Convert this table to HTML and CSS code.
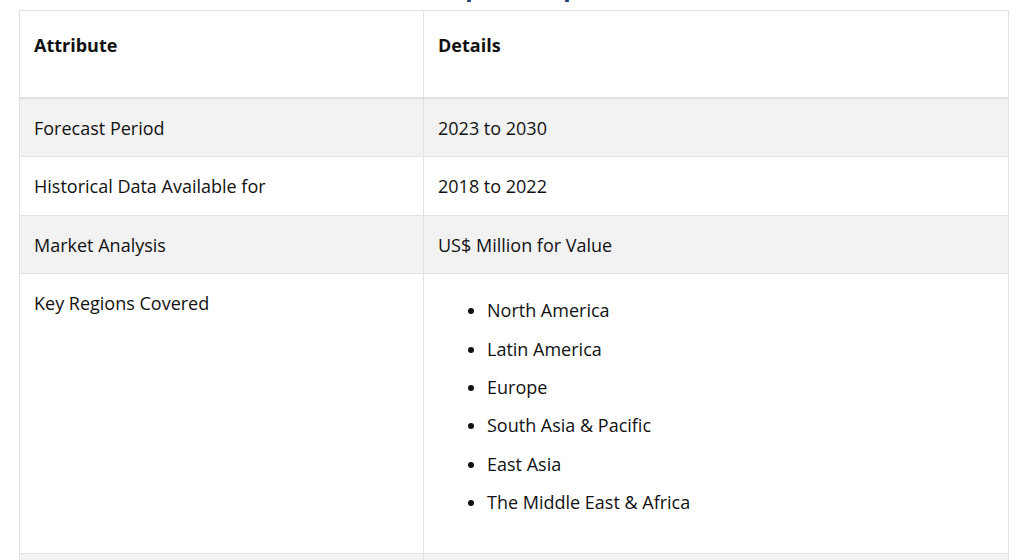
FILE: index.html
```html
<!DOCTYPE html>
<html lang="en">
<head>
    <meta charset="UTF-8">
    <meta name="viewport" content="width=device-width, initial-scale=1.0">
    <title>Report Scope</title>
    <link rel="stylesheet" href="styles.css">
</head>
<body>
    <div class="scope">
        <h2 class="scope-title">Report Scope</h2>
        <table class="scope-table">
            <thead>
                <tr>
                    <th class="col-attr">Attribute</th>
                    <th>Details</th>
                </tr>
            </thead>
            <tbody>
                <tr>
                    <td>Forecast Period</td>
                    <td>2023 to 2030</td>
                </tr>
                <tr>
                    <td>Historical Data Available for</td>
                    <td>2018 to 2022</td>
                </tr>
                <tr>
                    <td>Market Analysis</td>
                    <td>US$ Million for Value</td>
                </tr>
                <tr>
                    <td>Key Regions Covered</td>
                    <td>
                        <ul class="regions">
                            <li>North America</li>
                            <li>Latin America</li>
                            <li>Europe</li>
                            <li>South Asia &amp; Pacific</li>
                            <li>East Asia</li>
                            <li>The Middle East &amp; Africa</li>
                        </ul>
                    </td>
                </tr>
                <tr>
                    <td>Key Countries Covered</td>
                    <td>United States, Canada, Mexico, Brazil</td>
                </tr>
            </tbody>
        </table>
    </div>
</body>
</html>
```

FILE: styles.css
```css
* {
    margin: 0;
    padding: 0;
    box-sizing: border-box;
}

html, body {
    height: 100%;
    overflow: hidden;
}

body {
    font-family: "Open Sans", "Noto Sans", sans-serif;
    color: #111;
    background: #fff;
}

.scope {
    width: 990px;
    margin-left: 19px;
}

.scope-title {
    text-align: center;
    color: #1d3a78;
    font-size: 24px;
    font-weight: 700;
    line-height: 30px;
    margin-top: -28px;
    height: 38px;
}

.scope-table {
    width: 100%;
    border-collapse: collapse;
    border: 1px solid #e2e2e2;
    font-size: 18px;
}

.scope-table th,
.scope-table td {
    text-align: left;
    vertical-align: top;
    padding: 17px 15px 15px 14px;
    line-height: 25.6px;
    border: 1px solid #e2e2e2;
}

.scope-table th {
    font-weight: 700;
    height: 87px;
    padding-top: 22px;
    border-bottom: 2px solid #dde1e6;
}

.col-attr {
    width: 404px;
}

.scope-table tbody tr:nth-child(odd) {
    background: #f2f2f2;
}

.regions {
    padding-left: 49px;
    margin: 6px 0 22px;
}

.regions li {
    line-height: 26.6px;
    margin-bottom: 11.8px;
}
```
